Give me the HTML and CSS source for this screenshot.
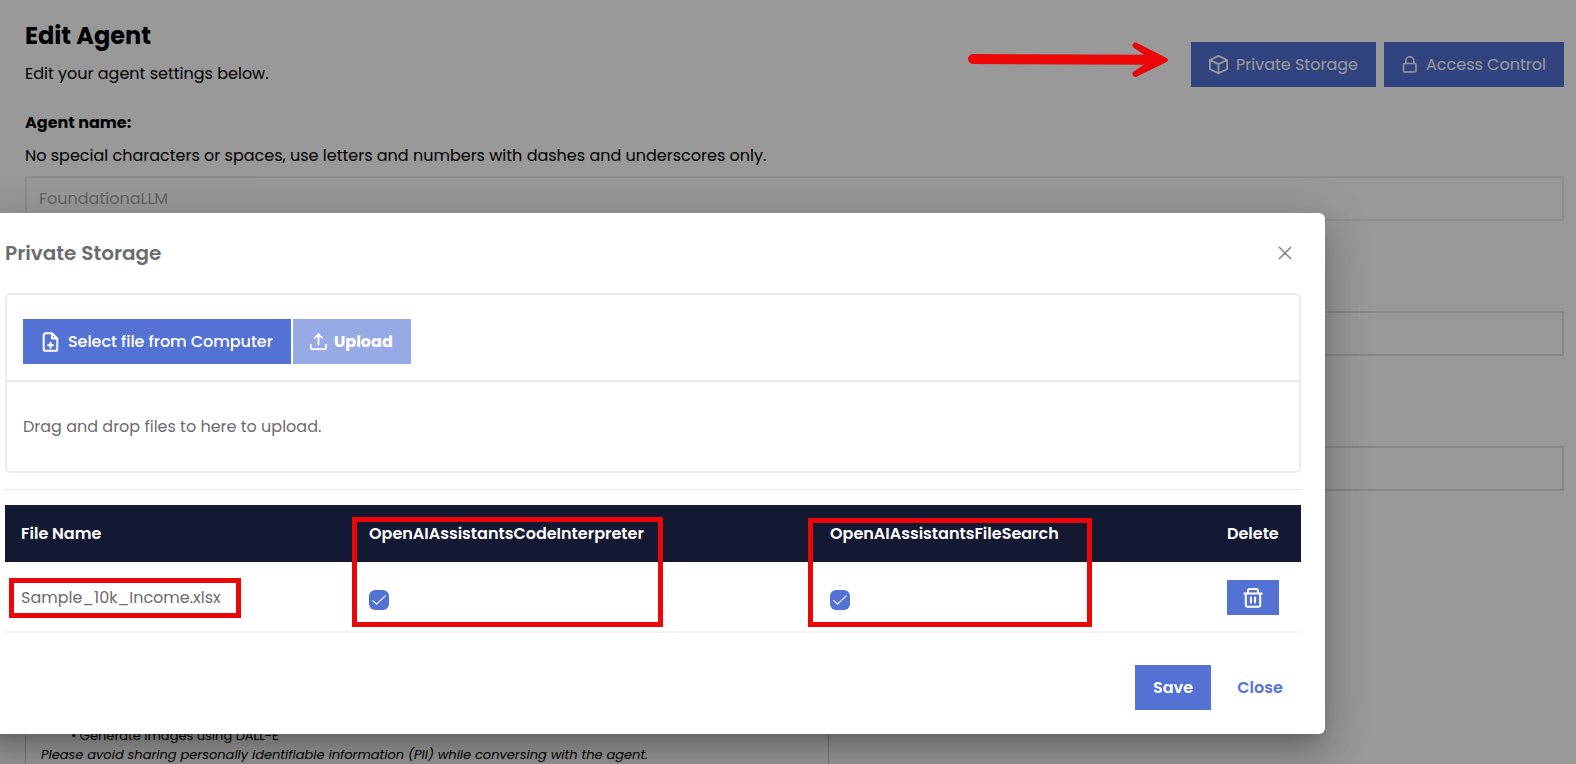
FILE: index.html
```html
<!DOCTYPE html>
<html lang="en">
<head>
<meta charset="utf-8">
<title>Edit Agent</title>
<link rel="stylesheet" href="styles.css">
</head>
<body>
<main class="page">
  <header class="page-header">
    <div>
      <h2 class="page-title">Edit Agent</h2>
      <p class="page-subtitle">Edit your agent settings below.</p>
    </div>
    <div class="page-actions">
      <button class="btn btn-storage">
        <svg width="20" height="20" viewBox="0 0 20 20" fill="none" stroke="currentColor" stroke-width="1.8" stroke-linejoin="round" stroke-linecap="round"><path d="M9.500 .9 18.100 5V14.200L9.500 18.300 .9 14.200V5ZM.9 5 9.500 9.100 18.100 5M9.500 9.100V18.300"/></svg>
        <span>Private Storage</span>
      </button>
      <button class="btn btn-access">
        <svg width="16" height="18" viewBox="0 0 16 18" fill="none" stroke="currentColor" stroke-width="1.6" stroke-linejoin="round"><rect x="1.500" y="7.500" width="12.500" height="8.500" rx="1.300"/><path d="M3.800 7.500V4.800a4 4 0 0 1 8 0V7.500"/></svg>
        <span>Access Control</span>
      </button>
    </div>
  </header>
  <div class="label">Agent name:</div>
  <div class="help">No special characters or spaces, use letters and numbers with dashes and underscores only.</div>
  <div class="field field-disabled">FoundationaLLM</div>
  <div class="field"></div>
  <div class="field"></div>
  <section class="welcome">
    <div class="welcome-item">• Generate images using DALL-E</div>
    <em>Please avoid sharing personally identifiable information (PII) while conversing with the agent.</em>
  </section>
</main>

<div class="mask">
  <section class="dialog">
    <header class="dialog-header">
      <h3 class="dialog-title">Private Storage</h3>
      <svg class="dialog-close" width="14" height="14" viewBox="0 0 14 14" fill="none" stroke="currentColor" stroke-width="1.6" stroke-linecap="round"><path d="M1.300 1.300 12.700 12.700M12.700 1.300 1.300 12.700"/></svg>
    </header>
    <div class="uploader">
      <div class="uploader-bar">
        <button class="btn btn-select">
          <svg width="18" height="20" viewBox="0 0 18 20" fill="none" stroke="currentColor" stroke-width="2" stroke-linejoin="round" stroke-linecap="round"><path d="M10 1.200H3.600A1.900 1.900 0 0 0 1.700 3.100V16.900A1.900 1.900 0 0 0 3.600 18.800H13.400A1.900 1.900 0 0 0 15.300 16.900V6.500ZM10 1.200V6.500H15.300M8.500 10.800V15.800M6 13.300H11"/></svg>
          <span>Select file from Computer</span>
        </button>
        <button class="btn btn-upload">
          <svg width="18" height="18" viewBox="0 0 18 18" fill="none" stroke="currentColor" stroke-width="1.700" stroke-linejoin="round" stroke-linecap="round"><path d="M8.500 11.500V1.300M4.800 4.800 8.500 1.100 12.200 4.800M.9 11.500V14.700A1.400 1.400 0 0 0 2.300 16.100H14.700A1.400 1.400 0 0 0 16.100 14.700V11.500"/></svg>
          <span>Upload</span>
        </button>
      </div>
      <div class="uploader-drop">Drag and drop files to here to upload.</div>
    </div>
    <hr class="rule">
    <div class="files">
      <div class="row row-head">
        <span>File Name</span>
        <span>OpenAIAssistantsCodeInterpreter</span>
        <span>OpenAIAssistantsFileSearch</span>
        <span>Delete</span>
      </div>
      <div class="row row-body">
        <span>Sample_10k_Income.xlsx</span>
        <span><i class="check"><svg width="14" height="14" viewBox="0 0 14 14" fill="none" stroke="#fff" stroke-width="1.1" stroke-linecap="round" stroke-linejoin="round"><path d="M.8 7.600 4.600 11.200 13.200 2.800"/></svg></i></span>
        <span><i class="check"><svg width="14" height="14" viewBox="0 0 14 14" fill="none" stroke="#fff" stroke-width="1.1" stroke-linecap="round" stroke-linejoin="round"><path d="M.8 7.600 4.600 11.200 13.200 2.800"/></svg></i></span>
        <button class="btn btn-delete">
          <svg width="20" height="20" viewBox="0 0 20 20" fill="none" stroke="currentColor" stroke-width="2" stroke-linejoin="round" stroke-linecap="round"><path d="M1.200 5.500H18.800M2.800 5.500V17A1.800 1.800 0 0 0 4.600 18.800H15.400A1.800 1.800 0 0 0 17.200 17V5.500M5 5.500V2.900A1.800 1.800 0 0 1 6.800 1.100H13.200A1.800 1.800 0 0 1 15 2.900V5.500M8 9.500V14.500M12 9.500V14.500"/></svg>
        </button>
      </div>
    </div>
    <footer class="dialog-footer">
      <button class="btn btn-save">Save</button>
      <button class="btn btn-close">Close</button>
    </footer>
  </section>
</div>

<div class="mark mark-file"></div>
<div class="mark mark-code"></div>
<div class="mark mark-search"></div>
<svg class="arrow" width="204" height="40" viewBox="0 0 204 40"><path d="M7 19 180 19.800" fill="none" stroke="#eb0707" stroke-width="10" stroke-linecap="round"/><path d="M171.500 3.300 200.500 18Q203.500 20 200.500 22L172 36A2.800 2.800 0 0 1 167.500 31.500L178.400 24.600V15L167.500 7.500A2.800 2.800 0 0 1 171.500 3.300Z" fill="#eb0707"/></svg>
</body>
</html>
```
FILE: styles.css
```css
* { box-sizing: border-box; }
body {
  margin: 0;
  height: 764px;
  overflow: hidden;
  position: relative;
  background: #fff;
  color: #000;
  font: 400 16px/24px Poppins, Inter, sans-serif;
}
h2, h3, p { margin: 0; }

.page { padding: 18px 12px 0 25px; }
.page-header { display: flex; justify-content: space-between; height: 93px; }
.page-title { font-size: 24px; line-height: 36px; font-weight: 700; }
.page-subtitle { margin-top: 8px; }
.page-actions { display: flex; gap: 8px; margin-top: 24px; }
.label { font-weight: 700; }
.help { margin: 9px 0 8px; }
.field {
  height: 45px;
  margin-bottom: 90px;
  padding: 0 12px;
  border: 2px solid #e1e1e1;
  line-height: 41px;
  color: #6c6c6c;
}
.field-disabled { opacity: .6; }
.welcome {
  width: 804px;
  height: 230px;
  margin-top: -41px;
  padding: 185px 0 0 15px;
  border: 1px solid #c8c8d2;
  font-size: 13px;
  line-height: 19px;
}
.welcome-item { padding-left: 30px; }

.btn {
  display: flex;
  align-items: center;
  height: 45px;
  padding: 0;
  border: 0;
  background: #5472d4;
  color: #fff;
  font: inherit;
  white-space: nowrap;
}
.btn svg { flex: none; }
.btn-storage { width: 185px; padding-left: 18px; gap: 7px; }
.btn-access { width: 180px; padding-left: 18px; gap: 8px; }
.btn-select { width: 268px; padding-left: 19px; gap: 8px; font-weight: 500; letter-spacing: -.05px; }
.btn-upload { width: 118px; padding-left: 17px; gap: 6px; font-weight: 700; opacity: .6; }
.btn-delete { width: 52px; height: 35px; justify-content: center; }
.btn-save { width: 76px; justify-content: center; font-weight: 600; }
.btn-close { width: 82px; justify-content: center; background: none; color: #5472d4; font-weight: 600; }

.mask { position: absolute; inset: 0; background: rgba(0, 0, 0, .4); }
.dialog {
  position: absolute;
  left: -19px;
  top: 213px;
  width: 1344px;
  height: 521px;
  padding: 0 24px;
  border-radius: 6px;
  background: #fff;
  color: #6c6c6c;
  box-shadow: 0 11px 15px -7px rgba(0, 0, 0, .2), 0 24px 38px 3px rgba(0, 0, 0, .14), 0 9px 46px 8px rgba(0, 0, 0, .12);
}
.dialog-header { display: flex; align-items: center; justify-content: space-between; height: 80px; padding-right: 9px; }
.dialog-title { font-size: 20px; line-height: 30px; font-weight: 600; }
.dialog-close { color: #888; }

.uploader { height: 180px; border: 2px solid #ebebeb; border-radius: 6px; }
.uploader-bar { display: flex; gap: 2px; height: 87px; padding: 24px 16px 0; border-bottom: 2px solid #ebebeb; }
.uploader-drop { padding: 33px 16px 32px; }
.rule { height: 1px; margin: 16px 0 15px; border: 0; background: #e6e6e6; }

.row { display: grid; grid-template-columns: 348px 461px 397px 90px; align-items: center; }
.row > span { padding-left: 16px; }
.row-head { height: 57px; background: #131932; color: #fff; font-weight: 600; }
.row-body { height: 71px; border-top: 2px solid #fafafa; border-bottom: 2px solid #f4f4f4; }
.row > .btn { margin-left: 16px; }
.check {
  display: flex;
  align-items: center;
  justify-content: center;
  width: 20px;
  height: 20px;
  margin-top: 5px;
  border-radius: 6px;
  background: #5472d4;
}
.dialog-footer { display: flex; justify-content: flex-end; gap: 8px; padding-top: 32px; }

/* Annotations drawn over the interface */
.mark { position: absolute; border: 5px solid #eb0707; }
.mark-file { left: 9px; top: 578px; width: 232px; height: 40px; }
.mark-code { left: 352px; top: 517px; width: 311px; height: 110px; }
.mark-search { left: 808px; top: 518px; width: 284px; height: 109px; }
.arrow { position: absolute; left: 966px; top: 40px; }
```
